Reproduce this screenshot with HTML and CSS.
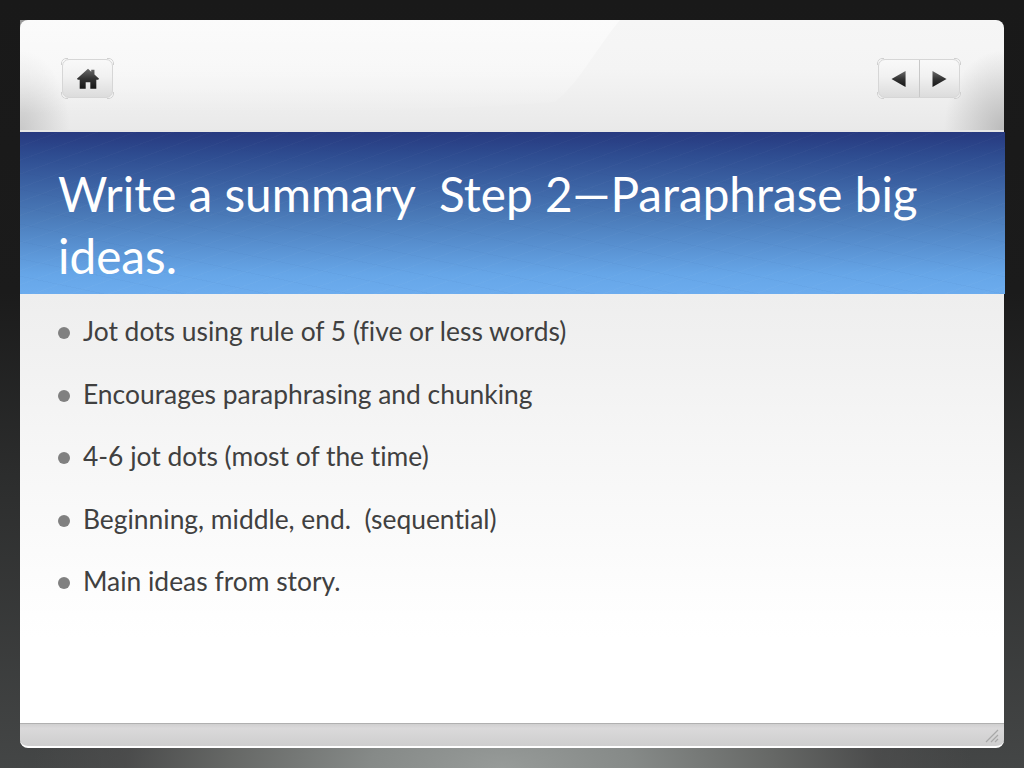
FILE: index.html
```html
<!DOCTYPE html>
<html lang="en">
<head>
<meta charset="utf-8">
<title>Write a summary</title>
<link rel="stylesheet" href="styles.css">
</head>
<body>
<main class="slide">
  <header class="top">
    <svg class="gloss" viewBox="0 0 984 112" aria-hidden="true">
      <defs>
        <linearGradient id="gl" x1="0" y1="0" x2="0" y2="1"><stop offset="0" stop-color="#fff" stop-opacity=".55"/><stop offset=".6" stop-color="#fff" stop-opacity=".3"/><stop offset="1" stop-color="#fff" stop-opacity="0"/></linearGradient>
        <linearGradient id="ig" x1="0" y1="0" x2="0" y2="1"><stop offset="0" stop-color="#6a6a6a"/><stop offset=".5" stop-color="#333"/><stop offset="1" stop-color="#151515"/></linearGradient>
      </defs>
      <path d="M0 0H600C575 30 560 62 535 82C400 92 150 96 0 92Z" fill="url(#gl)"/>
    </svg>
    <div class="btn btn-home">
      <svg class="home-icon" viewBox="0 0 26 24" aria-hidden="true">
        <path fill="url(#ig)" d="M13 1.5 16.5 4.6V2.5H20V7.7L25 12.3 24 13.4H22V23H15.5V16H10.5V23H4V13.4H2L1 12.3Z"/>
      </svg>
    </div>
    <div class="btn btn-nav">
      <div class="nav-part">
        <svg class="arrow" viewBox="0 0 16 18" aria-hidden="true"><path fill="url(#ig)" d="M0.5 9 15.5 0.5V17.5Z"/></svg>
      </div>
      <div class="nav-part nav-next">
        <svg class="arrow" viewBox="0 0 16 18" aria-hidden="true"><path fill="url(#ig)" d="M15.5 9 0.5 0.5V17.5Z"/></svg>
      </div>
    </div>
  </header>
  <section class="band">
    <h1 class="title">Write a summary&nbsp; Step 2—Paraphrase big ideas.</h1>
  </section>
  <section class="content">
    <ul class="points">
      <li class="point">Jot dots using rule of 5 (five or less words)</li>
      <li class="point">Encourages paraphrasing and chunking</li>
      <li class="point">4-6 jot dots (most of the time)</li>
      <li class="point">Beginning, middle, end.&nbsp; (sequential)</li>
      <li class="point">Main ideas from story.</li>
    </ul>
  </section>
  <footer class="bottom">
    <svg class="grip" viewBox="0 0 14 14" aria-hidden="true"><path d="M1 13 13 1M6 13 13 6M10 13 13 10" stroke="#a8a8a8" stroke-width="1.2" fill="none"/></svg>
  </footer>
</main>
</body>
</html>
```
FILE: styles.css
```css
* { box-sizing: border-box; }
html, body { margin: 0; height: 100%; }
body {
  width: 1024px;
  height: 768px;
  overflow: hidden;
  padding: 20px;
  font-family: "Lato", "Open Sans", sans-serif;
  font-variant-ligatures: none;
  background:
    radial-gradient(ellipse 470px 190px at 49% 100%, #979b99 0%, #868a88 28%, #666866 58%, rgba(80,80,80,.6) 80%, rgba(68,70,70,0) 100%),
    linear-gradient(180deg, #191919 0, #1b1b1b 38%, #2c2d2d 62%, #444646 100%);
}
.slide {
  width: 984px;
  height: 728px;
  display: flex;
  flex-direction: column;
}
.top {
  position: relative;
  height: 112px;
  padding: 39px 44px 0 42px;
  display: flex;
  justify-content: space-between;
  align-items: flex-start;
  border-radius: 8px 8px 0 0;
  border-bottom: 2px solid #e6e6e6;
  background:
    radial-gradient(ellipse 60px 80px at 100% 100%, rgba(175,175,175,.8), rgba(175,175,175,0)),
    radial-gradient(ellipse 50px 80px at 0 100%, rgba(190,190,190,.75), rgba(190,190,190,0)),
    linear-gradient(180deg, #f6f6f6 0, #f4f4f4 45%, #e9e9e9 100%);
}
.gloss {
  position: absolute;
  left: 0;
  top: 0;
  width: 984px;
  height: 112px;
}
.btn {
  position: relative;
  height: 39px;
  display: flex;
  border: 1px solid #d6d6d6;
  border-radius: 7px;
  background: linear-gradient(180deg, #f9f9f9 0, #f1f1f1 45%, #dcdcdc 100%);
}
.btn::before {
  content: "";
  position: absolute;
  inset: -2px;
  border: 1px solid #d0d0d0;
  border-radius: 5px;
  -webkit-mask:
    linear-gradient(#000 0 0) left top / 7px 7px no-repeat,
    linear-gradient(#000 0 0) right top / 7px 7px no-repeat,
    linear-gradient(#000 0 0) left bottom / 7px 7px no-repeat,
    linear-gradient(#000 0 0) right bottom / 7px 7px no-repeat;
  mask:
    linear-gradient(#000 0 0) left top / 7px 7px no-repeat,
    linear-gradient(#000 0 0) right top / 7px 7px no-repeat,
    linear-gradient(#000 0 0) left bottom / 7px 7px no-repeat,
    linear-gradient(#000 0 0) right bottom / 7px 7px no-repeat;
}
.btn-home {
  width: 51px;
  align-items: center;
  justify-content: center;
}
.home-icon { width: 24px; height: 23px; }
.btn-nav { width: 82px; }
.nav-part {
  flex: 1;
  display: flex;
  align-items: center;
  justify-content: center;
}
.nav-next { border-left: 1px solid #c8c8c8; }
.arrow { width: 15px; height: 18px; }
.band {
  height: 162px;
  margin-right: -1px;
  padding: 31px 38px 0 38px;
  background:
    repeating-linear-gradient(160deg, rgba(255,255,255,.02) 0 1px, rgba(255,255,255,0) 1px 13px),
    repeating-linear-gradient(12deg, rgba(30,60,120,.03) 0 1px, rgba(30,60,120,0) 1px 17px),
    linear-gradient(180deg, #27397f 0, #2e4c90 14%, #4a7ab8 52%, #66a6e8 88%, #6cacee 100%);
}
.title {
  margin: 0;
  font-size: 47.7px;
  line-height: 62px;
  font-weight: 400;
  color: #fff;
}
.content {
  flex: 1;
  padding: 19px 38px 0;
  background: linear-gradient(180deg, #eeeeee 0, #f8f8f8 45%, #ffffff 80%);
}
.points {
  margin: 0;
  padding: 0;
  list-style: none;
  display: flex;
  flex-direction: column;
  gap: 25px;
}
.point {
  position: relative;
  padding-left: 25px;
  font-size: 26.4px;
  line-height: 37.6px;
  color: #404040;
}
.point::before {
  content: "";
  position: absolute;
  left: 0;
  top: 14px;
  width: 12px;
  height: 12px;
  border-radius: 50%;
  background: #808080;
}
.bottom {
  height: 25px;
  position: relative;
  display: flex;
  justify-content: flex-end;
  align-items: flex-end;
  padding: 0 5px 3px 0;
  border-top: 1px solid #b0b0b0;
  border-bottom: 2px solid #fff;
  border-radius: 0 0 8px 8px;
  background: linear-gradient(180deg, #cfcfcf 0, #dad9da 20%, #cecece 100%);
}
.grip { width: 14px; height: 14px; }
```
